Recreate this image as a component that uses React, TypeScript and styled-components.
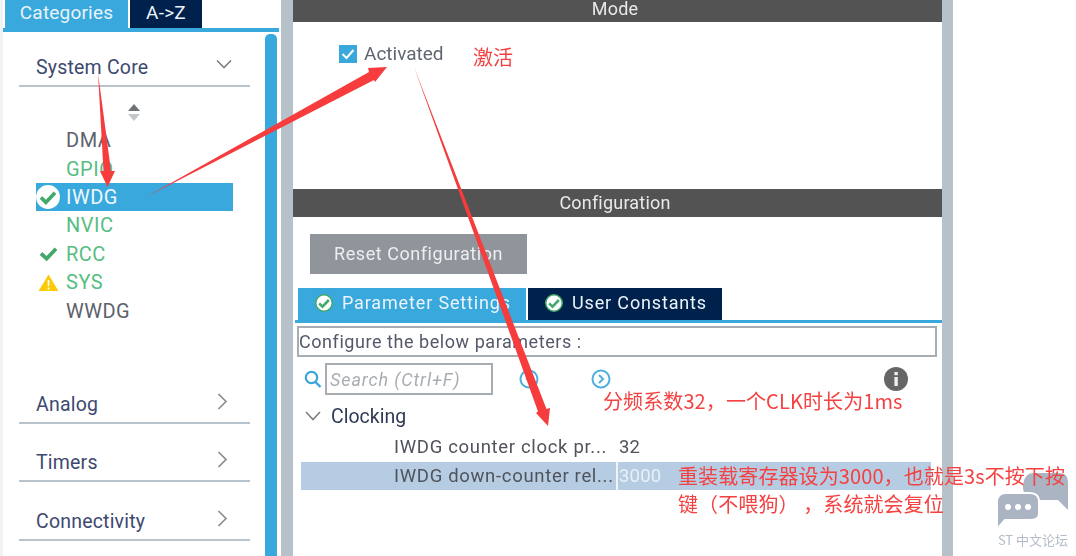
import React from "react";
import styled, { createGlobalStyle } from "styled-components";

const Global = createGlobalStyle`
    html, body {
        margin: 0;
        padding: 0;
        width: 1076px;
        height: 556px;
        overflow: hidden;
        background: #fff;
    }
`;

const Page = styled.div`
    position: relative;
    width: 1076px;
    height: 556px;
    overflow: hidden;
    background: #fff;
    font-family: Roboto, "Liberation Sans", sans-serif;
`;

const Shell = styled.div`
    display: grid;
    grid-template-columns: 281px 12px 649px 11px 123px;
    height: 556px;
    filter: blur(0.55px);
`;

const Divider = styled.div`
    background: #b6c1c9;
`;

/* left pane */
const Side = styled.div`
    display: flex;
    flex-direction: column;
    background: #fff;
    border-left: 3px solid #f1f2f2;
`;

const SideTabs = styled.div`
    display: flex;
    gap: 2px;
    height: 28px;
    padding-left: 2px;
`;

const SideTab = styled.div<{ $active?: boolean; $w: number }>`
    width: ${(p) => p.$w}px;
    display: flex;
    align-items: center;
    justify-content: center;
    background: ${(p) => (p.$active ? "#39a8dc" : "#00214b")};
    color: #e9f3fa;
    font-size: 19px;
    letter-spacing: 0.2px;
    padding-bottom: 3px;
    box-sizing: border-box;
`;

const SideStripe = styled.div`
    height: 4px;
    width: 276px;
    background: #39a8dc;
`;

const SideBody = styled.div`
    flex: 1;
    display: flex;
    min-height: 0;
`;

const Categories = styled.div`
    width: 231px;
    margin-left: 16px;
    padding-top: 18px;
`;

const Scroll = styled.div`
    width: 12px;
    margin: 2px 0 0 15px;
    background: #39a8dc;
    border-radius: 5px 5px 0 0;
`;

const Group = styled.div<{ $gap?: number }>`
    display: flex;
    align-items: center;
    justify-content: space-between;
    box-sizing: border-box;
    height: 37px;
    margin-top: ${(p) => p.$gap ?? 0}px;
    padding: 0 18px 0 17px;
    border-bottom: 2px solid #b9c3cb;
    color: #3d4970;
    font-size: 19.5px;
    letter-spacing: 0.2px;
`;

const GroupIcon = styled.svg<{ $right?: number }>`
    display: block;
    margin-top: -6px;
    margin-right: ${(p) => p.$right ?? 0}px;
`;

const SortIcon = styled.svg`
    display: block;
    margin: 16px 0 4px 108px;
`;

const Items = styled.div`
    margin-left: 17px;
    width: 197px;
`;

const Item = styled.div<{ $tone?: "plain" | "ok"; $selected?: boolean }>`
    display: flex;
    align-items: center;
    height: 28.4px;
    background: ${(p) => (p.$selected ? "#39a8dc" : "transparent")};
    color: ${(p) => (p.$selected ? "#eef7fc" : p.$tone === "ok" ? "#58bd82" : "#5d616c")};
    font-size: 20px;
    letter-spacing: 0.5px;
`;

const ItemIcon = styled.span`
    display: flex;
    align-items: center;
    justify-content: center;
    width: 24px;
    margin-right: 6px;
    height: 100%;
    flex: none;
`;

/* right pane */
const Main = styled.div`
    display: flex;
    flex-direction: column;
    gap: 12px;
`;

const Panel = styled.section<{ $h?: number }>`
    display: flex;
    flex-direction: column;
    background: #fff;
    height: ${(p) => (p.$h ? `${p.$h}px` : "auto")};
    flex: ${(p) => (p.$h ? "none" : "1")};
    min-height: 0;
`;

const PanelHead = styled.div<{ $h: number; $shift?: number }>`
    flex: none;
    height: ${(p) => p.$h}px;
    display: flex;
    align-items: center;
    justify-content: center;
    box-sizing: border-box;
    padding: 0 5px ${(p) => p.$shift ?? 0}px 0;
    background: #525352;
    color: #e8eaea;
    font-size: 18px;
    line-height: 16px;
    letter-spacing: 0.2px;
`;

const Check = styled.label`
    display: flex;
    align-items: center;
    gap: 7px;
    margin: 20px 0 0 46px;
    color: #5f6670;
    font-size: 19px;
`;

const Box = styled.span`
    width: 18px;
    height: 18px;
    background: #39a8dc;
    display: flex;
    align-items: center;
    justify-content: center;
`;

const ResetButton = styled.div`
    box-sizing: border-box;
    width: 217px;
    height: 40px;
    margin: 17px 0 0 17px;
    padding-bottom: 1px;
    background: #8f959b;
    color: #eceeef;
    font-size: 18px;
    letter-spacing: 0.55px;
    display: flex;
    align-items: center;
    justify-content: center;
`;

const ParamTabs = styled.div`
    display: flex;
    gap: 2px;
    height: 32px;
    margin: 14px 0 0 5px;
`;

const ParamTab = styled.div<{ $active?: boolean; $w: number }>`
    width: ${(p) => p.$w}px;
    display: flex;
    align-items: center;
    gap: 9px;
    padding: 0 0 3px 17px;
    box-sizing: border-box;
    background: ${(p) => (p.$active ? "#39a8dc" : "#00214b")};
    color: #eaf4fa;
    font-size: 18px;
    letter-spacing: 0.85px;
`;

const ParamStripe = styled.div`
    height: 3px;
    margin-left: 2px;
    background: #39a8dc;
`;

const Hint = styled.div`
    box-sizing: border-box;
    height: 31px;
    width: 640px;
    margin: 3px 0 0 4px;
    border: 2px solid #a8adb1;
    color: #55586a;
    font-size: 18px;
    letter-spacing: 0.55px;
    display: flex;
    align-items: center;
`;

const Toolbar = styled.div`
    display: flex;
    align-items: center;
    height: 32px;
    margin: 6px 0 0 11px;
`;

const SearchBox = styled.div`
    box-sizing: border-box;
    width: 168px;
    height: 32px;
    margin-left: 3px;
    padding-left: 3px;
    border: 2px solid #a8adb1;
    color: #a9adb1;
    font-size: 18px;
    font-style: italic;
    letter-spacing: 0.9px;
    display: flex;
    align-items: center;
`;

const RoundIcon = styled.svg<{ $left: number }>`
    display: block;
    margin-left: ${(p) => p.$left}px;
    flex: none;
`;

const TreeHead = styled.div`
    display: flex;
    align-items: center;
    gap: 10px;
    height: 28px;
    margin: 7px 0 0 12px;
    color: #2f3a55;
    font-size: 19.5px;
`;

const Rows = styled.div`
    margin: 3px 0 0 8px;
    width: 630px;
`;

const Row = styled.div<{ $selected?: boolean }>`
    display: grid;
    grid-template-columns: 315px 1fr;
    box-sizing: border-box;
    height: 28.5px;
    padding-bottom: ${(p) => (p.$selected ? 0 : 1)}px;
    align-items: center;
    background: ${(p) => (p.$selected ? "#b5cce3" : "transparent")};
    color: #50535c;
    font-size: 18.5px;
    letter-spacing: 0.68px;
`;

const RowLabel = styled.div`
    padding-left: 93px;
    white-space: nowrap;
`;

const RowValue = styled.div<{ $selected?: boolean }>`
    height: 100%;
    display: flex;
    align-items: center;
    padding-left: 1px;
    letter-spacing: 0.2px;
    border-left: 2px solid ${(p) => (p.$selected ? "#f0f4f8" : "transparent")};
    color: ${(p) => (p.$selected ? "#eaf0f6" : "#50535c")};
`;

/* annotations pasted over the screenshot */
const Marks = styled.svg`
    position: absolute;
    inset: 0;
    pointer-events: none;
`;

const Note = styled.div<{ $x: number; $y: number }>`
    position: absolute;
    left: ${(p) => p.$x}px;
    top: ${(p) => p.$y}px;
    color: #f44141;
    font-family: "Noto Sans CJK SC", "Noto Sans", sans-serif;
    font-size: 20px;
    line-height: 28px;
    letter-spacing: 0.1px;
    white-space: nowrap;
`;

const Watermark = styled.div`
    position: absolute;
    left: 996px;
    top: 472px;
    width: 74px;
    display: flex;
    flex-direction: column;
    align-items: center;
    color: #b3bdc9;
    font-size: 13px;
    font-family: "Noto Sans CJK SC", "Noto Sans", sans-serif;
`;

const WatermarkLabel = styled.span`
    line-height: 20px;
    white-space: nowrap;
`;

const ChevronDown = () => (
    <GroupIcon width="16" height="11" viewBox="0 0 16 11">
        <path d="M1 1.5 L8 8.5 L15 1.5" fill="none" stroke="#7c8084" strokeWidth="1.6" />
    </GroupIcon>
);

const ChevronRight = () => (
    <GroupIcon $right={4} width="11" height="17" viewBox="0 0 11 17">
        <path d="M1.5 1 L9 8.5 L1.5 16" fill="none" stroke="#85898d" strokeWidth="1.6" />
    </GroupIcon>
);

const OkBadge = ({ size, ring }: { size: number; ring?: boolean }) => (
    <svg width={size} height={size} viewBox="0 0 24 24" style={{ flex: "none" }}>
        <circle cx="12" cy="12" r="11" fill="#fff" stroke={ring ? "#43a86b" : "none"} strokeWidth="2" />
        <path d="M5.5 12.5 L10 17 L18.5 8" fill="none" stroke="#43a86b" strokeWidth="3.4" />
    </svg>
);

const CheckMark = () => (
    <svg width="19" height="15" viewBox="0 0 20 16">
        <path d="M2 8 L8 13.5 L18 3" fill="none" stroke="#43a86b" strokeWidth="4" />
    </svg>
);

const Warning = () => (
    <svg width="21" height="17" viewBox="0 0 21 17">
        <path d="M10.5 0.5 L20.5 17 L0.5 17 Z" fill="#fbcb0a" />
        <path d="M10.5 6 V12 M10.5 13.5 V15.5" stroke="#fff" strokeWidth="1.6" />
    </svg>
);

const Circle = ({ dir, left }: { dir: "left" | "right"; left: number }) => (
    <RoundIcon $left={left} width="20" height="20" viewBox="0 0 20 20">
        <circle cx="10" cy="10" r="8.5" fill="none" stroke="#4fb0de" strokeWidth="2" />
        <path
            d={dir === "right" ? "M8 6 L12 10 L8 14" : "M12 6 L8 10 L12 14"}
            fill="none"
            stroke="#4fb0de"
            strokeWidth="2"
        />
    </RoundIcon>
);

const system = [
    { name: "DMA" },
    { name: "GPIO", ok: true },
    { name: "IWDG", ok: true, selected: true, icon: <OkBadge size={26} /> },
    { name: "NVIC", ok: true },
    { name: "RCC", ok: true, icon: <CheckMark /> },
    { name: "SYS", ok: true, icon: <Warning /> },
    { name: "WWDG" },
];

export default function App() {
    return (
        <Page>
            <Global />
            <Shell>
                <Side>
                    <SideTabs>
                        <SideTab $active $w={123}>Categories</SideTab>
                        <SideTab $w={72}>A-&gt;Z</SideTab>
                    </SideTabs>
                    <SideStripe />
                    <SideBody>
                        <Categories>
                            <Group>
                                System Core
                                <ChevronDown />
                            </Group>
                            <SortIcon width="14" height="19" viewBox="0 0 14 19">
                                <path d="M7 1 L13 8 H1 Z" fill="#6f7377" />
                                <path d="M7 18 L13 11 H1 Z" fill="#c4c8cb" />
                            </SortIcon>
                            <Items>
                                {system.map((item) => (
                                    <Item key={item.name} $tone={item.ok ? "ok" : "plain"} $selected={item.selected}>
                                        <ItemIcon>{item.icon}</ItemIcon>
                                        {item.name}
                                    </Item>
                                ))}
                            </Items>
                            <Group $gap={62}>
                                Analog
                                <ChevronRight />
                            </Group>
                            <Group $gap={21.5}>
                                Timers
                                <ChevronRight />
                            </Group>
                            <Group $gap={21.5}>
                                Connectivity
                                <ChevronRight />
                            </Group>
                        </Categories>
                        <Scroll />
                    </SideBody>
                </Side>
                <Divider />
                <Main>
                    <Panel $h={177}>
                        <PanelHead $h={22} $shift={4}>Mode</PanelHead>
                        <Check>
                            <Box>
                                <svg width="14" height="12" viewBox="0 0 14 12">
                                    <path d="M1.5 6 L5.5 10 L12.5 2" fill="none" stroke="#fff" strokeWidth="2" />
                                </svg>
                            </Box>
                            Activated
                        </Check>
                    </Panel>
                    <Panel>
                        <PanelHead $h={28} $shift={1}>Configuration</PanelHead>
                        <ResetButton>Reset Configuration</ResetButton>
                        <ParamTabs>
                            <ParamTab $active $w={228}>
                                <OkBadge size={18} ring />
                                Parameter Settings
                            </ParamTab>
                            <ParamTab $w={194}>
                                <OkBadge size={18} ring />
                                User Constants
                            </ParamTab>
                        </ParamTabs>
                        <ParamStripe />
                        <Hint>Configure the below parameters :</Hint>
                        <Toolbar>
                            <svg width="18" height="20" viewBox="0 0 18 20">
                                <circle cx="7.5" cy="8.5" r="5.7" fill="none" stroke="#3aa5dc" strokeWidth="2.2" />
                                <path d="M11.5 13 L16.5 18" stroke="#3aa5dc" strokeWidth="2.4" />
                            </svg>
                            <SearchBox>Search (Ctrl+F)</SearchBox>
                            <Circle dir="left" left={26} />
                            <Circle dir="right" left={52} />
                            <RoundIcon $left={273} width="24" height="24" viewBox="0 0 24 24">
                                <circle cx="12" cy="12" r="12" fill="#666" />
                                <rect x="10.4" y="10" width="3.4" height="9" fill="#eee" />
                                <rect x="10.4" y="5" width="3.4" height="3.2" fill="#eee" />
                            </RoundIcon>
                        </Toolbar>
                        <TreeHead>
                            <svg width="16" height="10" viewBox="0 0 16 10">
                                <path d="M1 1 L8 8.5 L15 1" fill="none" stroke="#7c8084" strokeWidth="1.6" />
                            </svg>
                            Clocking
                        </TreeHead>
                        <Rows>
                            <Row>
                                <RowLabel>IWDG counter clock pr...</RowLabel>
                                <RowValue>32</RowValue>
                            </Row>
                            <Row $selected>
                                <RowLabel>IWDG down-counter rel...</RowLabel>
                                <RowValue $selected>3000</RowValue>
                            </Row>
                        </Rows>
                    </Panel>
                </Main>
                <Divider />
            </Shell>

            <Watermark>
                <svg width="74" height="58" viewBox="0 0 74 58">
                    <path d="M38 1 H63 Q72 1 72 10 V38 L62 28 H40 Q26 24 27 14 Q28 1 38 1 Z" fill="#aab4c2" />
                    <path d="M10 21 H34 Q43 21 43 30 V42 Q43 48 34 48 H9 L1 57 V30 Q1 21 10 21 Z" fill="#aab4c2" stroke="#fff" strokeWidth="2" />
                    <circle cx="12" cy="35" r="3" fill="#fff" />
                    <circle cx="22" cy="35" r="3" fill="#fff" />
                    <circle cx="32" cy="35" r="3" fill="#fff" />
                </svg>
                <WatermarkLabel>ST 中文论坛</WatermarkLabel>
            </Watermark>

            <Marks width="1076" height="556" viewBox="0 0 1076 556">
                <path d="M98 73 L111 171 L115 171 L107.5 187 L100 171 L103.5 171 Z" fill="#f63c3c" />
                <path d="M146 197 L369 72 L368 68 L387 67 L375 82 L374 80 Z" fill="#f63c3c" />
                <path d="M414 67 L546.5 409 L550 408 L548 426 L536 413 L538 411.5 Z" fill="#f63c3c" />
            </Marks>
            <Note $x={473} $y={43}>激活</Note>
            <Note $x={603} $y={387}>分频系数32，一个CLK时长为1ms</Note>
            <Note $x={678} $y={462}>
                重装载寄存器设为3000，也就是3s不按下按
                <br />
                键（不喂狗）{"\u00a0"}，系统就会复位
            </Note>
        </Page>
    );
}
